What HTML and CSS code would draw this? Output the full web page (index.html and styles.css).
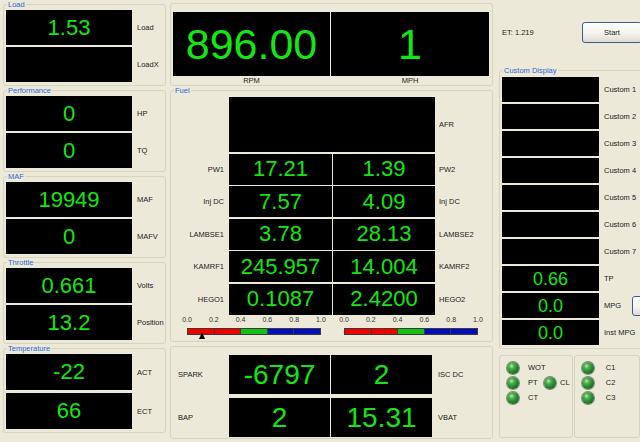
FILE: index.html
```html
<!DOCTYPE html>
<html>
<head>
<meta charset="utf-8">
<title>Gauges</title>
<link rel="stylesheet" href="styles.css">
</head>
<body>
<div class="app">
  <div class="col-left">
    <fieldset class="grp lgrp"><legend>Load</legend>
      <div class="stack">
        <div class="row"><div class="disp">1.53</div><span class="lbl">Load</span></div>
        <div class="row"><div class="disp"></div><span class="lbl">LoadX</span></div>
      </div>
    </fieldset>
    <fieldset class="grp lgrp"><legend>Performance</legend>
      <div class="stack">
        <div class="row"><div class="disp">0</div><span class="lbl">HP</span></div>
        <div class="row"><div class="disp">0</div><span class="lbl">TQ</span></div>
      </div>
    </fieldset>
    <fieldset class="grp lgrp"><legend>MAF</legend>
      <div class="stack">
        <div class="row"><div class="disp">19949</div><span class="lbl">MAF</span></div>
        <div class="row"><div class="disp">0</div><span class="lbl">MAFV</span></div>
      </div>
    </fieldset>
    <fieldset class="grp lgrp"><legend>Throttle</legend>
      <div class="stack">
        <div class="row"><div class="disp">0.661</div><span class="lbl">Volts</span></div>
        <div class="row"><div class="disp">13.2</div><span class="lbl">Position</span></div>
      </div>
    </fieldset>
    <fieldset class="grp lgrp tall"><legend>Temperature</legend>
      <div class="stack">
        <div class="row"><div class="disp">-22</div><span class="lbl">ACT</span></div>
        <div class="row"><div class="disp">66</div><span class="lbl">ECT</span></div>
      </div>
    </fieldset>
  </div>

  <div class="col-mid">
    <fieldset class="grp topgrp">
      <div class="bigpair">
        <div class="bigcell"><div class="disp">896.00</div><span class="caption">RPM</span></div>
        <div class="bigcell wide"><div class="disp">1</div><span class="caption">MPH</span></div>
      </div>
    </fieldset>

    <fieldset class="grp fuel"><legend>Fuel</legend>
      <div class="fgrid">
        <div class="disp afr"></div><span class="rl r1">AFR</span>
        <span class="ll r2">PW1</span><div class="disp c1 r2">17.21</div><div class="disp c2 r2">1.39</div><span class="rl r2">PW2</span>
        <span class="ll r3">Inj DC</span><div class="disp c1 r3">7.57</div><div class="disp c2 r3">4.09</div><span class="rl r3">Inj DC</span>
        <span class="ll r4">LAMBSE1</span><div class="disp c1 r4">3.78</div><div class="disp c2 r4">28.13</div><span class="rl r4">LAMBSE2</span>
        <span class="ll r5">KAMRF1</span><div class="disp c1 r5">245.957</div><div class="disp c2 r5">14.004</div><span class="rl r5">KAMRF2</span>
        <span class="ll r6">HEGO1</span><div class="disp c1 r6">0.1087</div><div class="disp c2 r6">2.4200</div><span class="rl r6">HEGO2</span>
      </div>
      <div class="bars">
        <div class="gauge">
          <div class="scale"><span>0.0</span><span>0.2</span><span>0.4</span><span>0.6</span><span>0.8</span><span>1.0</span></div>
          <div class="bar"><i class="seg red"></i><i class="seg red"></i><i class="seg green"></i><i class="seg blue"></i><i class="seg blue"></i></div>
          <b class="marker" style="left:18.6px"></b>
        </div>
        <div class="gauge">
          <div class="scale"><span>0.0</span><span>0.2</span><span>0.4</span><span>0.6</span><span>0.8</span><span>1.0</span></div>
          <div class="bar"><i class="seg red"></i><i class="seg red"></i><i class="seg green"></i><i class="seg blue"></i><i class="seg blue"></i></div>
        </div>
      </div>
    </fieldset>

    <fieldset class="grp bot">
      <div class="bgrid">
        <span class="bl q1">SPARK</span><div class="disp c1 q1">-6797</div><div class="disp c2 q1">2</div><span class="br q1">ISC DC</span>
        <span class="bl q2">BAP</span><div class="disp c1 q2">2</div><div class="disp c2 q2">15.31</div><span class="br q2">VBAT</span>
      </div>
    </fieldset>
  </div>

  <div class="col-right">
    <div class="ctrl">
      <span class="et">ET: 1.219</span>
      <button class="btn">Start</button>
    </div>
    <fieldset class="grp custom"><legend>Custom Display</legend>
      <div class="cstack">
        <div class="crow"><div class="disp"></div><span class="clbl">Custom 1</span></div>
        <div class="crow"><div class="disp"></div><span class="clbl">Custom 2</span></div>
        <div class="crow"><div class="disp"></div><span class="clbl">Custom 3</span></div>
        <div class="crow"><div class="disp"></div><span class="clbl">Custom 4</span></div>
        <div class="crow"><div class="disp"></div><span class="clbl">Custom 5</span></div>
        <div class="crow"><div class="disp"></div><span class="clbl">Custom 6</span></div>
        <div class="crow"><div class="disp"></div><span class="clbl">Custom 7</span></div>
        <div class="crow"><div class="disp">0.66</div><span class="clbl">TP</span></div>
        <div class="crow"><div class="disp">0.0</div><span class="clbl">MPG</span><span class="mini"></span></div>
        <div class="crow"><div class="disp">0.0</div><span class="clbl">Inst MPG</span></div>
      </div>
    </fieldset>
    <div class="leds">
      <fieldset class="grp ledgrp">
        <div class="lgrid">
          <span class="led" style="grid-area:1/1"></span><span class="ltxt" style="grid-area:1/2">WOT</span>
          <span class="led" style="grid-area:2/1"></span><span class="ltxt" style="grid-area:2/2">PT</span>
          <span class="led" style="grid-area:2/3"></span><span class="ltxt2" style="grid-area:2/4">CL</span>
          <span class="led" style="grid-area:3/1"></span><span class="ltxt" style="grid-area:3/2">CT</span>
        </div>
      </fieldset>
      <fieldset class="grp ledgrp ledgrp2">
        <div class="lgrid2">
          <span class="led"></span><span class="ltxt3">C1</span>
          <span class="led"></span><span class="ltxt3">C2</span>
          <span class="led"></span><span class="ltxt3">C3</span>
        </div>
      </fieldset>
    </div>
  </div>
</div>
</body>
</html>
```

FILE: styles.css
```css
* { box-sizing: border-box; }
html, body { margin: 0; padding: 0; }
body {
  width: 640px;
  height: 442px;
  overflow: hidden;
  background: #ece9d8;
  font-family: "Liberation Sans", Arial, sans-serif;
  font-size: 7.5px;
  color: #222;
}
.app { display: flex; width: 640px; height: 442px; }
.col-left { width: 166px; flex: none; }
.col-mid { width: 329px; flex: none; }
.col-right { width: 145px; flex: none; }

.grp {
  margin: 0;
  padding: 0;
  border: 1px solid #d6d3c2;
  border-radius: 3px;
  min-width: 0;
}
.grp legend {
  padding: 0 1px;
  margin-left: 1px;
  font-size: 7.5px;
  line-height: 9px;
  color: #2f66d6;
}

.disp {
  background: #000;
  color: #14e614;
  font-size: 22px;
  line-height: 1;
  display: flex;
  align-items: center;
  justify-content: center;
}

/* left column */
.lgrp { margin-left: 3px; width: 163px; padding: 1px 0 3px 2px; }
.stack { display: flex; flex-direction: column; gap: 2px; }
.row { display: flex; align-items: center; gap: 5px; height: 35px; }
.row .disp { width: 126px; height: 100%; }
.tall .stack { gap: 3px; }
.tall .row { height: 36px; }

/* middle column */
.topgrp { margin: 3px 0 0 4px; width: 323px; padding: 8px 0 0 2px; }
.bigpair { display: flex; gap: 1px; }
.bigcell { display: flex; flex-direction: column; align-items: center; }
.bigcell .disp { width: 157px; height: 64px; font-size: 43px; }
.bigcell.wide .disp { width: 158px; }
.caption { line-height: 9px; }

.fuel { margin-left: 4px; width: 323px; padding: 2px 0 6px 0; }
.fuel legend { margin-left: 3px; }
.fgrid {
  display: grid;
  grid-template-columns: 58px 103px 1px 102px 1fr;
  grid-template-rows: 55px repeat(5, 31px);
  row-gap: 1.5px;
}
.afr { grid-column: 2 / 5; grid-row: 1; }
.c1 { grid-column: 2; }
.c2 { grid-column: 4; }
.ll { grid-column: 1; text-align: right; padding-right: 5px; align-self: center; }
.rl { grid-column: 5; padding-left: 4px; align-self: center; }
.r1 { grid-row: 1; }
.r2 { grid-row: 2; }
.r3 { grid-row: 3; }
.r4 { grid-row: 4; }
.r5 { grid-row: 5; }
.r6 { grid-row: 6; }

.bars { display: flex; gap: 9px; margin: 1px 0 0 9px; }
.gauge { position: relative; width: 148px; }
.scale { display: flex; justify-content: space-between; line-height: 8px; font-size: 7px; color: #333; }
.scale span { width: 14px; text-align: center; }
.bar {
  display: flex;
  margin: 4.5px 0 0 7px;
  width: 134px;
  height: 7px;
  border: 1px solid #3a3a3a;
}
.seg { flex: 1; border-left: 1px solid #3a3a3a; }
.seg:first-child { border-left: 0; }
.red { background: #f20000; }
.green { background: #14c014; }
.blue { background: #0010b8; }
.marker {
  position: absolute;
  top: 16.5px;
  width: 0;
  height: 0;
  border-left: 3px solid transparent;
  border-right: 3px solid transparent;
  border-bottom: 7px solid #000;
}

.bot { margin: 4px 0 0 4px; width: 323px; padding: 8px 0 1px 0; }
.bgrid {
  display: grid;
  grid-template-columns: 58px 101px 1px 101px 1fr;
  grid-template-rows: 39px 39px;
  row-gap: 4px;
}
.bgrid .disp { font-size: 28px; }
.q1 { grid-row: 1; }
.q2 { grid-row: 2; }
.bl { grid-column: 1; padding-left: 7px; align-self: center; }
.br { grid-column: 5; padding-left: 6px; align-self: center; }

/* right column */
.ctrl {
  height: 66px;
  padding: 0 0 2px 7px;
  margin-right: -2px;
  display: flex;
  align-items: center;
  justify-content: space-between;
}
.btn {
  width: 60px;
  height: 21px;
  margin: 0;
  padding: 0;
  border: 1px solid #3d5b8c;
  border-radius: 3px;
  background: linear-gradient(#ffffff, #f4f3ee 55%, #dedbd0);
  font-family: "Liberation Sans", Arial, sans-serif;
  font-size: 7.5px;
  color: #222;
}
.custom { margin-left: 4px; width: 160px; padding: 2px 0 3px 2px; }
.cstack { display: flex; flex-direction: column; gap: 2px; }
.crow { display: flex; align-items: center; height: 25px; }
.crow .disp { width: 97px; height: 100%; font-size: 18px; flex: none; }
.clbl { width: 28px; margin-left: 5px; flex: none; white-space: nowrap; }
.mini {
  width: 20px;
  height: 20px;
  flex: none;
  border: 1px solid #3d5b8c;
  border-radius: 3px;
  background: linear-gradient(#ffffff, #f4f3ee 55%, #dedbd0);
}

.leds { display: flex; margin-top: 6px; }
.ledgrp { margin-left: 4px; width: 78px; height: 83px; padding: 4px 0 0 7px; }
.ledgrp2 { margin-left: 1px; width: 70px; }
.lgrid {
  display: grid;
  grid-template-columns: 12px 25px 12px auto;
  grid-template-rows: 15px 15px 15px;
  align-items: center;
}
.lgrid2 {
  display: grid;
  grid-template-columns: 12px auto;
  grid-template-rows: 15px 15px 15px;
  align-items: center;
}
.led {
  width: 12px;
  height: 12px;
  border-radius: 50%;
  background: radial-gradient(circle at 38% 34%, #b8eeb4 0, #55b055 22%, #1f7f28 58%, #0f4414 100%);
  box-shadow: 0 0 0 1px #7d897b;
}
.ltxt { padding-left: 9px; }
.ltxt2 { padding-left: 4px; }
.ltxt3 { padding-left: 12px; }
```
